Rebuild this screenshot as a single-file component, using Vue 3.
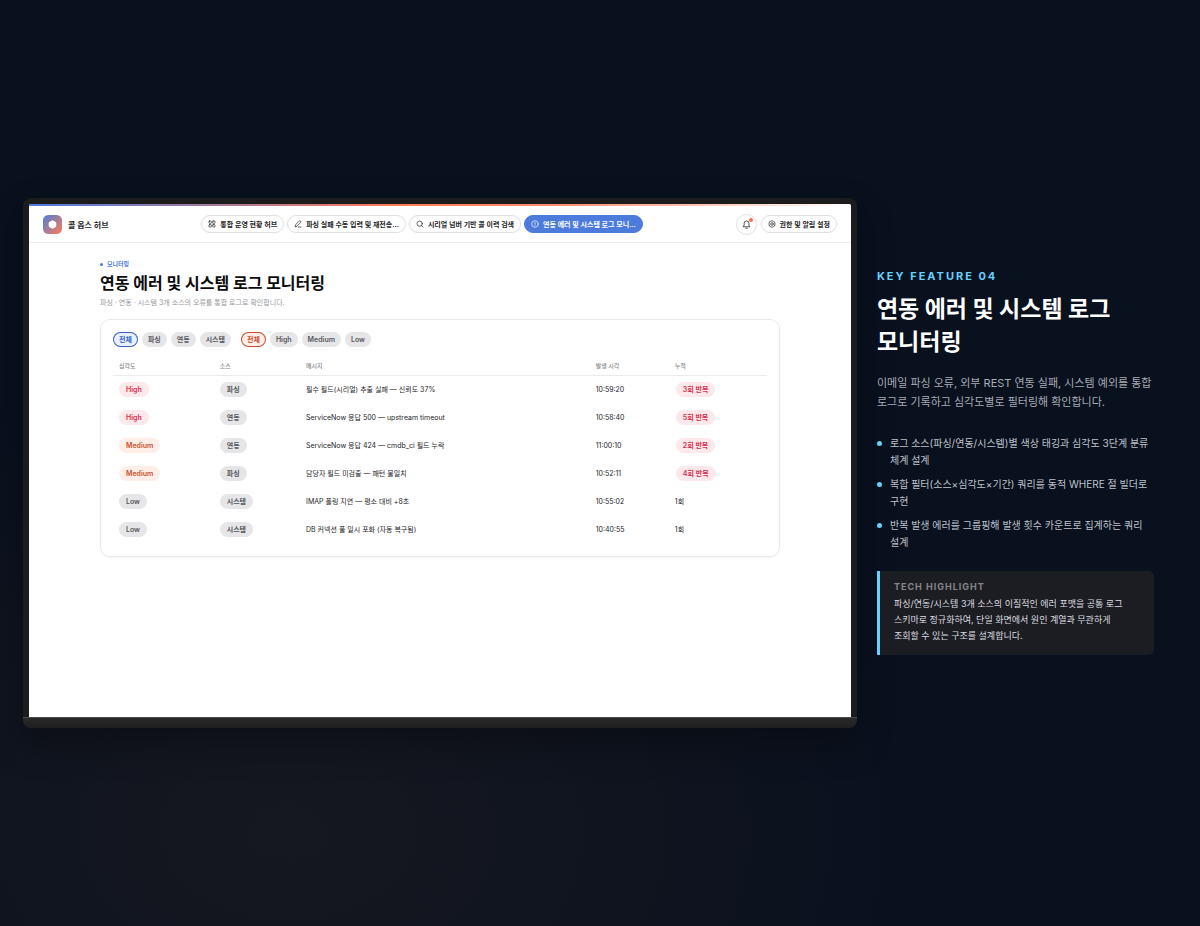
<script setup>
import { ref } from 'vue'

const navItems = [
  { icon: 'grid', label: '통합 운영 현황 허브' },
  { icon: 'pen', label: '파싱 실패 수동 입력 및 재전송...' },
  { icon: 'search', label: '시리얼 넘버 기반 콜 이력 검색' },
  { icon: 'info', label: '연동 에러 및 시스템 로그 모니...' },
]
const activeNav = 3

const sources = ['전체', '파싱', '연동', '시스템']
const severities = ['전체', 'High', 'Medium', 'Low']
const source = ref('전체')
const severity = ref('전체')

const logs = [
  { level: 'High', source: '파싱', message: '필수 필드(시리얼) 추출 실패 — 신뢰도 37%', time: '10:59:20', count: 3 },
  { level: 'High', source: '연동', message: 'ServiceNow 응답 500 — upstream timeout', time: '10:58:40', count: 5 },
  { level: 'Medium', source: '연동', message: 'ServiceNow 응답 424 — cmdb_ci 필드 누락', time: '11:00:10', count: 2 },
  { level: 'Medium', source: '파싱', message: '담당자 필드 미검출 — 패턴 불일치', time: '10:52:11', count: 4 },
  { level: 'Low', source: '시스템', message: 'IMAP 폴링 지연 — 평소 대비 +8초', time: '10:55:02', count: 1 },
  { level: 'Low', source: '시스템', message: 'DB 커넥션 풀 일시 포화 (자동 복구됨)', time: '10:40:55', count: 1 },
]

const points = [
  '로그 소스(파싱/연동/시스템)별 색상 태깅과 심각도 3단계 분류 체계 설계',
  '복합 필터(소스×심각도×기간) 쿼리를 동적 WHERE 절 빌더로 구현',
  '반복 발생 에러를 그룹핑해 발생 횟수 카운트로 집계하는 쿼리 설계',
]
</script>

<template>
  <main class="slide">
    <section class="monitor">
      <div class="screen">
        <header class="topbar">
          <a class="brand" href="#">
            <svg class="logo" viewBox="0 0 18 18" aria-hidden="true">
              <defs>
                <linearGradient id="logo-fill" x1="0" y1="0" x2="1" y2="1">
                  <stop offset="0.1" stop-color="#5b7fd0" />
                  <stop offset="0.9" stop-color="#f07c62" />
                </linearGradient>
              </defs>
              <rect width="18" height="18" rx="5" fill="url(#logo-fill)" />
              <path d="M9 6 11.600 7.500v3L9 12l-2.600-1.500v-3z" fill="#fff" stroke="#fff" stroke-width="2" stroke-linejoin="round" />
            </svg>
            <span>콜 옵스 허브</span>
          </a>
          <nav class="nav">
            <a
              v-for="(item, i) in navItems"
              :key="item.label"
              href="#"
              class="pill"
              :class="{ active: i === activeNav }"
            >
              <svg class="icon" viewBox="0 0 24 24" aria-hidden="true">
                <template v-if="item.icon === 'grid'">
                  <rect x="3" y="3" width="7" height="7" rx="1.5" />
                  <rect x="14" y="3" width="7" height="7" rx="1.5" />
                  <rect x="3" y="14" width="7" height="7" rx="1.5" />
                  <rect x="14" y="14" width="7" height="7" rx="1.5" />
                </template>
                <template v-else-if="item.icon === 'pen'">
                  <path d="M12 21h9" />
                  <path d="M15.500 3.500a2.500 2.500 0 0 1 4.500 4L8.500 19 3 20.500 4.500 15z" />
                </template>
                <template v-else-if="item.icon === 'search'">
                  <circle cx="11" cy="11" r="8" />
                  <path d="m21 21-4.300-4.300" />
                </template>
                <template v-else>
                  <circle cx="12" cy="12" r="10" />
                  <path d="M12 7v6M12 16.500v.5" />
                </template>
              </svg>
              <span>{{ item.label }}</span>
            </a>
          </nav>
          <div class="tools">
            <button class="bell" type="button" aria-label="알림">
              <svg class="icon" viewBox="0 0 24 24" aria-hidden="true">
                <path d="M5.500 9a6.500 6.500 0 0 1 13 0v5l2.500 4H3l2.500-4zM10 22h4" />
              </svg>
              <i class="dot"></i>
            </button>
            <a class="pill" href="#">
              <svg class="icon" viewBox="0 0 24 24" aria-hidden="true">
                <path d="M8.500 3.500 12 2l3.500 1.500L20 6l1 6-1 6-4.500 2.500L12 22l-3.500-1.500L4 18l-1-6 1-6z" />
                <circle cx="12" cy="12" r="4" />
              </svg>
              <span>권한 및 알림 설정</span>
            </a>
          </div>
        </header>

        <div class="content">
          <p class="crumb">모니터링</p>
          <h1>연동 에러 및 시스템 로그 모니터링</h1>
          <p class="sub">파싱 · 연동 · 시스템 3개 소스의 오류를 통합 로그로 확인합니다.</p>

          <div class="card">
            <div class="filters">
              <div class="group">
                <button
                  v-for="s in sources"
                  :key="s"
                  type="button"
                  class="chip"
                  :class="{ blue: s === source }"
                  @click="source = s"
                >{{ s }}</button>
              </div>
              <div class="group">
                <button
                  v-for="s in severities"
                  :key="s"
                  type="button"
                  class="chip"
                  :class="{ orange: s === severity }"
                  @click="severity = s"
                >{{ s }}</button>
              </div>
            </div>
            <table>
              <colgroup>
                <col class="c-level" /><col class="c-source" /><col class="c-message" /><col class="c-time" /><col />
              </colgroup>
              <thead>
                <tr><th>심각도</th><th>소스</th><th>메시지</th><th>발생 시각</th><th>누적</th></tr>
              </thead>
              <tbody>
                <tr v-for="log in logs" :key="log.time">
                  <td><span class="badge" :class="log.level.toLowerCase()">{{ log.level }}</span></td>
                  <td><span class="badge low">{{ log.source }}</span></td>
                  <td>{{ log.message }}</td>
                  <td>{{ log.time }}</td>
                  <td>
                    <span v-if="log.count > 1" class="badge high">{{ log.count }}회 반복</span>
                    <template v-else>{{ log.count }}회</template>
                  </td>
                </tr>
              </tbody>
            </table>
          </div>
        </div>
      </div>
      <div class="base"></div>
    </section>

    <aside class="side">
      <p class="eyebrow">KEY FEATURE 04</p>
      <h2>연동 에러 및 시스템 로그<br />모니터링</h2>
      <p class="desc">이메일 파싱 오류, 외부 REST 연동 실패, 시스템 예외를 통합 로그로 기록하고 심각도별로 필터링해 확인합니다.</p>
      <ul>
        <li v-for="p in points" :key="p">{{ p }}</li>
      </ul>
      <div class="tech">
        <h3>TECH HIGHLIGHT</h3>
        <p>파싱/연동/시스템 3개 소스의 이질적인 에러 포맷을 공통 로그<br />스키마로 정규화하여, 단일 화면에서 원인 계열과 무관하게<br />조회할 수 있는 구조를 설계합니다.</p>
      </div>
    </aside>
  </main>
</template>

<style>
body {
  margin: 0;
  background: #09101e;
}
</style>

<style scoped>
* {
  box-sizing: border-box;
}
p, h1, h2, h3, ul {
  margin: 0;
  padding: 0;
}
a {
  color: inherit;
  text-decoration: none;
}
button {
  font: inherit;
  cursor: pointer;
}
.slide {
  min-height: 100vh;
  display: grid;
  grid-template-columns: 301fr 100fr;
  align-items: center;
  gap: 20px;
  padding: 20px 46px 20px 23px;
  font-family: Inter, "Noto Sans CJK KR", sans-serif;
  word-break: keep-all;
  background: radial-gradient(ellipse 56% 50% at 24% 90%, #161820, rgba(22, 24, 32, 0)), #09101e;
}

.monitor {
  border-radius: 8px;
  box-shadow: 0 16px 36px rgba(0, 0, 0, 0.3);
}
.screen {
  aspect-ratio: 45 / 28;
  border: 6px solid #1b1c1b;
  border-bottom: 0;
  border-radius: 8px 8px 0 0;
  background: #fff;
  color: #1d1d1f;
}
.screen::before {
  content: "";
  display: block;
  height: 2px;
  border-radius: 2px 2px 0 0;
  background: linear-gradient(90deg, #4c7be0, #ff7a59 45%, #ff8f73 65%, #fff);
}
.base {
  height: 11px;
  border-top: 1px solid #4a4a4a;
  border-radius: 0 0 8px 8px;
  background: linear-gradient(#2a2a2a, #1e1f1e);
}

.topbar {
  display: flex;
  align-items: center;
  justify-content: space-between;
  height: 37px;
  padding: 0 14px;
  border-bottom: 1px solid #ececee;
}
.brand {
  display: flex;
  align-items: center;
  gap: 6px;
  font-size: 8px;
  font-weight: 700;
  white-space: nowrap;
}
.logo {
  width: 19px;
  height: 19px;
}
.nav, .tools {
  display: flex;
  align-items: center;
  gap: 3px;
}
.tools {
  gap: 4px;
}
.pill {
  display: flex;
  align-items: center;
  gap: 4px;
  height: 18px;
  padding: 0 6px;
  border: 1px solid #e0e0e3;
  border-radius: 9px;
  font-size: 7px;
  font-weight: 600;
  white-space: nowrap;
  background: #fff;
}
.pill.active {
  border-color: #4c7bdc;
  background: #4c7bdc;
  color: #fff;
}
.icon {
  flex: none;
  width: 8px;
  height: 8px;
  fill: none;
  stroke: currentColor;
  stroke-width: 2;
  stroke-linecap: round;
  stroke-linejoin: round;
}
.bell {
  position: relative;
  display: grid;
  place-items: center;
  width: 21px;
  height: 21px;
  padding: 0;
  border: 1px solid #e0e0e3;
  border-radius: 50%;
  background: #fff;
  color: #1d1d1f;
}
.bell .icon {
  width: 9px;
  height: 9px;
}
.dot {
  position: absolute;
  top: 3px;
  right: 3px;
  width: 4px;
  height: 4px;
  border-radius: 50%;
  background: #ff6b4a;
}

.content {
  padding: 15px 71px;
}
.crumb {
  display: flex;
  align-items: center;
  gap: 4px;
  font-size: 6px;
  line-height: 12px;
  font-weight: 600;
  color: #4c7bdc;
}
.crumb::before {
  content: "";
  width: 3px;
  height: 3px;
  border-radius: 50%;
  background: currentColor;
}
h1 {
  font-size: 16px;
  line-height: 26px;
  font-weight: 700;
  color: #0c0c0e;
}
.sub {
  font-size: 7px;
  line-height: 14px;
  color: #98989d;
}
.card {
  margin-top: 9px;
  padding: 12px 12px 13px;
  border: 1px solid #e9e9eb;
  border-radius: 10px;
  box-shadow: 0 1px 2px rgba(0, 0, 0, 0.04);
}
.filters {
  display: flex;
  gap: 10px;
}
.group {
  display: flex;
  gap: 4px;
}
.chip, .badge {
  display: inline-block;
  height: 15px;
  padding: 0 7px;
  border: 0;
  border-radius: 8px;
  font-size: 7px;
  line-height: 15px;
  font-weight: 600;
  vertical-align: middle;
  background: #e6e6e8;
  color: #58585c;
}
.chip {
  padding: 0 6px;
}
.chip.blue {
  background: #e9f0fd;
  color: #3563c4;
  box-shadow: inset 0 0 0 1px #3563c4;
}
.chip.orange {
  background: #fdeee9;
  color: #c94f30;
  box-shadow: inset 0 0 0 1px #c94f30;
}
table {
  width: 100%;
  margin-top: 9px;
  table-layout: fixed;
  border-collapse: collapse;
  font-size: 7px;
}
.c-level { width: 15.4%; }
.c-source { width: 13.2%; }
.c-message { width: 44.3%; }
.c-time { width: 12.1%; }
th, td {
  padding: 0 6px;
  text-align: left;
  white-space: nowrap;
}
th {
  height: 19px;
  border-bottom: 1px solid #ececee;
  font-size: 6px;
  font-weight: 500;
  color: #86868b;
}
td {
  height: 28px;
}
td + td .badge.high {
  margin-left: 1px;
}
.badge.high {
  background: #fde8eb;
  color: #d6304f;
}
.badge.medium {
  background: #ffeee8;
  color: #c9532f;
}

.side {
  padding-bottom: 2px;
}
.eyebrow {
  margin-bottom: 10px;
  font-size: 11px;
  line-height: 14px;
  font-weight: 700;
  letter-spacing: 2px;
  color: #64d2ff;
}
h2 {
  font-size: 23px;
  line-height: 33px;
  font-weight: 700;
  color: #fff;
}
.desc {
  margin-top: 15px;
  font-size: 11px;
  line-height: 19px;
  color: #a7abb5;
}
ul {
  display: grid;
  gap: 7px;
  margin-top: 23px;
  list-style: none;
}
li {
  display: flex;
  gap: 8px;
  font-size: 10px;
  line-height: 17px;
  color: #bfc3cb;
}
li::before {
  content: "";
  flex: none;
  width: 5px;
  height: 5px;
  margin-top: 6px;
  border-radius: 50%;
  background: #64d2ff;
}
.tech {
  margin-top: 20px;
  padding: 10px 14px 11px;
  border-left: 3px solid #64d2ff;
  border-radius: 0 6px 6px 0;
  background: #1c1d22;
}
h3 {
  font-size: 9px;
  line-height: 12px;
  font-weight: 700;
  letter-spacing: 1px;
  color: #86868b;
}
.tech p {
  margin-top: 3px;
  font-size: 9px;
  line-height: 16px;
  white-space: nowrap;
  color: #dcdde0;
}
</style>
